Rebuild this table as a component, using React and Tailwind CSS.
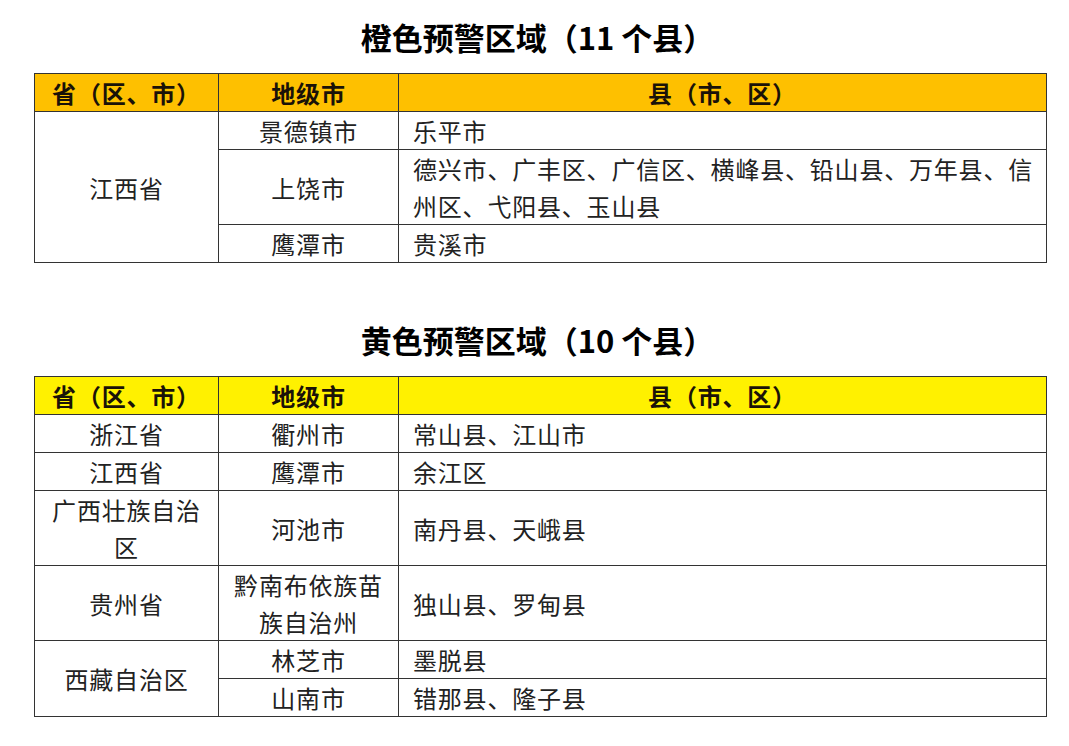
const orange = [
  {
    prov: "江西省",
    rows: [
      { city: "景德镇市", counties: "乐平市" },
      {
        city: "上饶市",
        counties: ["德兴市、广丰区、广信区、横峰县、铅山县、万年县、信", "州区、弋阳县、玉山县"],
      },
      { city: "鹰潭市", counties: "贵溪市" },
    ],
  },
];

const yellow = [
  { prov: "浙江省", rows: [{ city: "衢州市", counties: "常山县、江山市" }] },
  { prov: "江西省", rows: [{ city: "鹰潭市", counties: "余江区" }] },
  { prov: ["广西壮族自治", "区"], rows: [{ city: "河池市", counties: "南丹县、天峨县" }] },
  { prov: "贵州省", rows: [{ city: ["黔南布依族苗", "族自治州"], counties: "独山县、罗甸县" }] },
  {
    prov: "西藏自治区",
    rows: [
      { city: "林芝市", counties: "墨脱县" },
      { city: "山南市", counties: "错那县、隆子县" },
    ],
  },
];

function Lines({ value }) {
  if (!Array.isArray(value)) return value;
  return value.map((line, i) => (
    <span key={i}>
      {i > 0 && <br />}
      {line}
    </span>
  ));
}

function Section({ title, headBg, groups }) {
  return (
    <div>
      <h2 className="h-[73px] pl-[6px] text-center text-[31px] font-bold leading-[73px] text-black">{title}</h2>
      <table className="ml-[34px] w-[1013px] table-fixed border-collapse text-[24px] leading-[37px] tracking-[0.8px] text-[#222]">
        <colgroup>
          <col className="w-[184px]" />
          <col className="w-[180px]" />
          <col />
        </colgroup>
        <thead>
          <tr className={headBg}>
            <th className="border border-[#333] p-0 text-center font-bold text-[#1a1208]">省（区、市）</th>
            <th className="border border-[#333] p-0 text-center font-bold text-[#1a1208]">地级市</th>
            <th className="border border-[#333] p-0 text-center font-bold text-[#1a1208]">县（市、区）</th>
          </tr>
        </thead>
        <tbody>
          {groups.map((g, gi) =>
            g.rows.map((r, ri) => (
              <tr key={`${gi}-${ri}`}>
                {ri === 0 && (
                  <td rowSpan={g.rows.length} className="border border-[#333] p-0 text-center align-middle">
                    <Lines value={g.prov} />
                  </td>
                )}
                <td className="border border-[#333] p-0 text-center align-middle">
                  <Lines value={r.city} />
                </td>
                <td className="border border-[#333] py-0 pl-[14px] pr-0 text-left align-middle">
                  <Lines value={r.counties} />
                </td>
              </tr>
            ))
          )}
        </tbody>
      </table>
    </div>
  );
}

export default function App() {
  return (
    <div
      className="h-[746px] w-[1069px] overflow-hidden bg-white"
      style={{ fontFamily: '"Noto Sans CJK SC", "Noto Sans", sans-serif' }}
    >
      <Section title="橙色预警区域（11 个县）" headBg="bg-[#fec000]" groups={orange} />
      <div className="h-[40px]" />
      <Section title="黄色预警区域（10 个县）" headBg="bg-[#fff100]" groups={yellow} />
    </div>
  );
}
